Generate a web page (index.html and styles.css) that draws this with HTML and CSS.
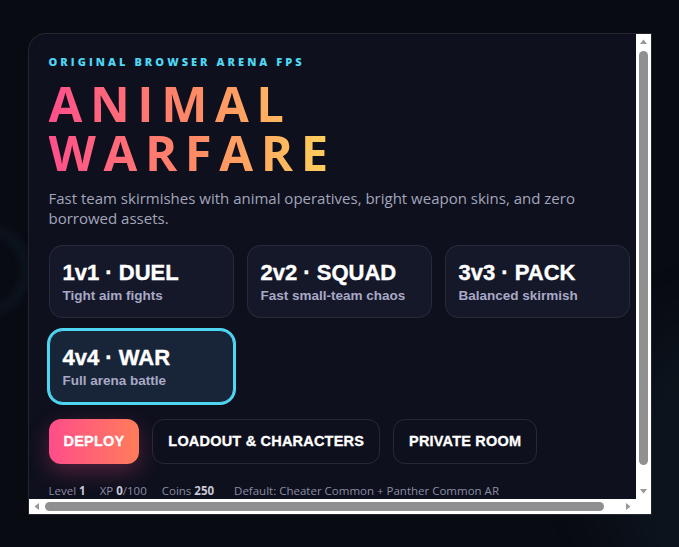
FILE: index.html
```html
<!DOCTYPE html>
<html lang="en">
<head>
<meta charset="utf-8">
<title>Animal Warfare</title>
<link rel="stylesheet" href="styles.css">
</head>
<body>
<div class="stage">
  <div class="glow glow-left"></div>
  <div class="glow glow-right"></div>
  <section class="panel">
    <div class="content">
      <p class="eyebrow">Original browser arena FPS</p>
      <h1 class="title"><span class="title-line">ANIMAL</span><span class="title-line">WARFARE</span></h1>
      <p class="lede">Fast team skirmishes with animal operatives, bright weapon skins, and zero borrowed assets.</p>
      <div class="modes">
        <button class="mode"><span class="mode-name">1v1 · DUEL</span><span class="mode-sub">Tight aim fights</span></button>
        <button class="mode"><span class="mode-name">2v2 · SQUAD</span><span class="mode-sub">Fast small-team chaos</span></button>
        <button class="mode"><span class="mode-name">3v3 · PACK</span><span class="mode-sub">Balanced skirmish</span></button>
        <button class="mode selected"><span class="mode-name">4v4 · WAR</span><span class="mode-sub">Full arena battle</span></button>
      </div>
      <div class="actions">
        <button class="btn primary">DEPLOY</button>
        <button class="btn ghost">LOADOUT &amp; CHARACTERS</button>
        <button class="btn ghost">PRIVATE ROOM</button>
      </div>
      <p class="stats">
        <span>Level <b>1</b></span>
        <span>XP <b>0</b>/100</span>
        <span class="coins">Coins <b>250</b></span>
        <span class="loadout">Default: Cheater Common + Panther Common AR</span>
      </p>
    </div>
    <div class="vbar">
      <svg class="arrow" width="15" height="15" viewBox="0 0 15 15"><polygon points="4,10 11,10 7.5,5.5" fill="#979797"/></svg>
      <div class="track"><div class="thumb"></div></div>
      <svg class="arrow" width="15" height="15" viewBox="0 0 15 15"><polygon points="4,5 11,5 7.5,9.5" fill="#979797"/></svg>
    </div>
    <div class="hbar">
      <svg class="arrow" width="15" height="15" viewBox="0 0 15 15"><polygon points="10,4 10,11 5.5,7.5" fill="#979797"/></svg>
      <div class="track"><div class="thumb"></div></div>
      <svg class="arrow" width="15" height="15" viewBox="0 0 15 15"><polygon points="5,4 5,11 9.5,7.5" fill="#979797"/></svg>
    </div>
    <div class="corner"></div>
  </section>
</div>
</body>
</html>
```
FILE: styles.css
```css
* { box-sizing: border-box; }
html, body { margin: 0; height: 100%; }
body {
  background: #090b13;
  font-family: "Open Sans", "Noto Sans", sans-serif;
  color: #fff;
  overflow: hidden;
}
.stage {
  position: relative;
  height: 100%;
  display: flex;
  align-items: center;
  justify-content: center;
}
.glow {
  position: absolute;
  border-radius: 50%;
  pointer-events: none;
}
.glow-left {
  width: 90px; height: 90px;
  left: -60px; top: 225px;
  border: 8px solid rgba(40, 90, 110, 0.14);
  filter: blur(5px);
}
.glow-right {
  width: 200px; height: 300px;
  right: -130px; top: 320px;
  background: rgba(20, 60, 70, 0.18);
  filter: blur(30px);
}
.panel {
  position: relative;
  width: 624px;
  height: 482px;
  overflow: hidden;
  background: #0e101d;
  border: 1px solid rgba(255, 255, 255, 0.09);
  border-radius: 18px 0 0 0;
}
.content {
  padding: 20px 20px 16px;
}
/* drawn scrollbars (overlay the clipped content) */
.vbar, .hbar, .corner {
  position: absolute;
  background: #fff;
  display: flex;
}
.vbar {
  top: 0; right: 0; bottom: 15px;
  width: 15px;
  flex-direction: column;
}
.hbar {
  left: 0; bottom: 0; right: 15px;
  height: 15px;
}
.corner {
  right: 0; bottom: 0;
  width: 15px; height: 15px;
}
.arrow { flex: none; display: block; }
.track { flex: 1; position: relative; }
.vbar .track { padding: 2px 3px 19px; }
.hbar .track { padding: 3px 17px 3px 1px; }
.thumb {
  width: 100%;
  height: 100%;
  background: #909090;
  border-radius: 5px;
}
.eyebrow {
  margin: 0;
  font-size: 11px;
  font-weight: 800;
  letter-spacing: 3.05px;
  text-transform: uppercase;
  color: #4fd6f2;
  line-height: 16px;
}
.title {
  margin: 9px 0 0;
  font-size: 49px;
  font-weight: 700;
  letter-spacing: 7.6px;
  background: linear-gradient(90deg, #ff4f8b 0%, #ff8a65 50%, #ffd55a 100%);
  -webkit-background-clip: text;
  background-clip: text;
  color: transparent;
  width: 292px;
}
.title-line {
  display: block;
  height: 49px;
  line-height: 49px;
}
.lede {
  margin: 11px 0 0;
  max-width: 545px;
  font-size: 15px;
  line-height: 20px;
  color: #a3a6bb;
}
.modes {
  margin-top: 17px;
  display: grid;
  grid-template-columns: repeat(3, 185px);
  gap: 12px 13px;
}
.mode {
  display: flex;
  flex-direction: column;
  align-items: flex-start;
  gap: 3px;
  height: 73px;
  padding: 14px 13px;
  border-radius: 14px;
  border: 1px solid rgba(255, 255, 255, 0.08);
  background: #151829;
  font-family: "Liberation Sans", Arial, sans-serif;
  color: #fff;
  text-align: left;
}
.mode-name {
  font-size: 22px;
  font-weight: 700;
  line-height: 25px;
  -webkit-text-stroke: 0.4px #fff;
}
.mode-sub {
  font-size: 13.5px;
  font-weight: 700;
  color: #a9a9c6;
  line-height: 16px;
}
.mode.selected {
  background: #182538;
  border-color: #4fd6f2;
  box-shadow: 0 0 0 2px #4fd6f2;
}
.actions {
  margin-top: 16px;
  display: flex;
  gap: 13px;
}
.btn {
  height: 45px;
  padding: 0 15px;
  border-radius: 12px;
  font-family: "Liberation Sans", Arial, sans-serif;
  font-size: 14.5px;
  font-weight: 700;
  color: #fff;
  letter-spacing: 0.2px;
  -webkit-text-stroke: 0.3px #fff;
}
.primary {
  border: none;
  background: linear-gradient(90deg, #ff4d8a, #ff7c5a);
  box-shadow: 0 8px 22px rgba(255, 77, 138, 0.28);
}
.ghost {
  background: transparent;
  border: 1px solid rgba(255, 255, 255, 0.1);
}
.stats {
  margin: 18px 0 0;
  display: flex;
  gap: 14px;
  font-size: 11.5px;
  line-height: 18px;
  color: #8a8da3;
  white-space: nowrap;
}
.stats .coins { margin-left: 1px; }
.stats .loadout { margin-left: 6px; }
.stats b {
  color: #c5c7d6;
  font-weight: 700;
}
```
